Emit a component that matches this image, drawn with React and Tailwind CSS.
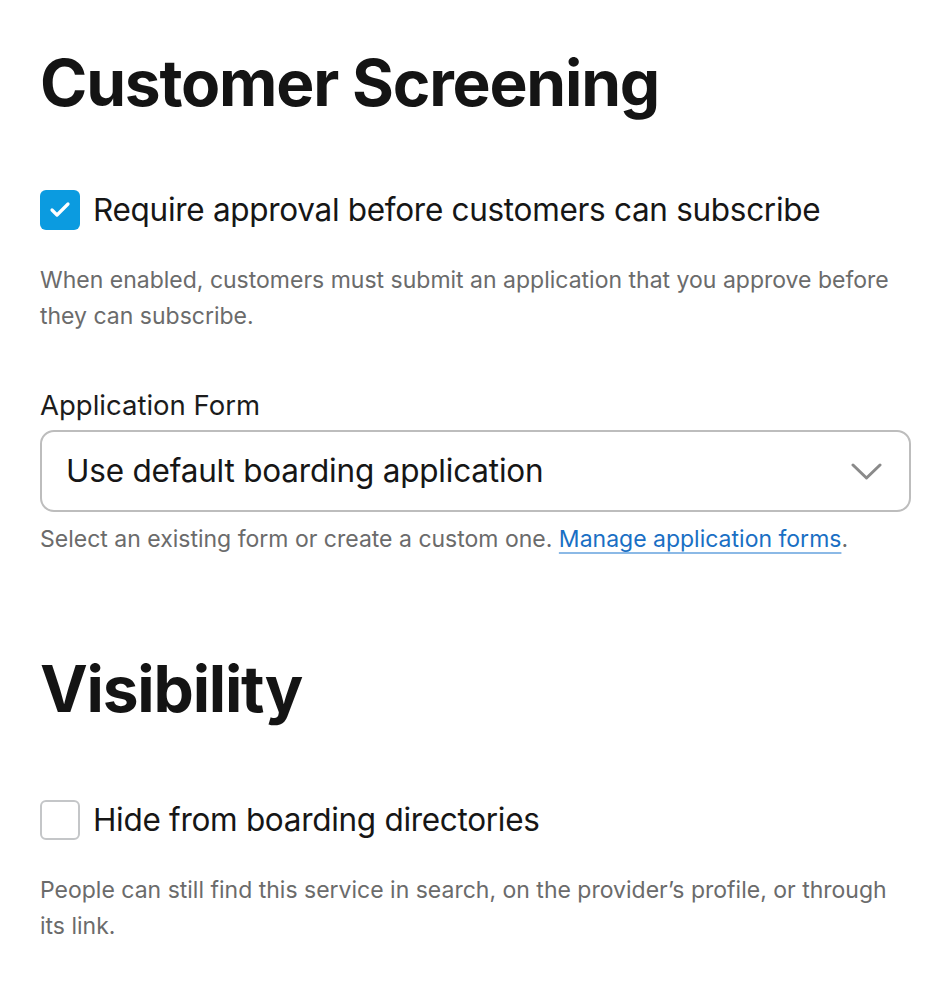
import { Check } from 'lucide-react';

function CheckRow({ checked, label }) {
  return (
    <label className="flex items-center gap-[13px]">
      {checked ? (
        <span className="flex h-10 w-10 items-center justify-center rounded-[6px] bg-[#0b9be0]">
          <Check className="h-6 w-6 text-white" strokeWidth={3.2} />
        </span>
      ) : (
        <span className="h-10 w-10 rounded-[6px] border-2 border-[#c4c6c8] bg-white" />
      )}
      <span className="text-[31.5px] leading-10 tracking-[-0.3px] text-[#161616]">{label}</span>
    </label>
  );
}

export default function App() {
  return (
    <div className="min-h-screen bg-white px-10 pt-[45px]" style={{ fontFamily: 'Inter, "Noto Sans", sans-serif' }}>
      {/* Customer Screening */}
      <h1 className="text-[64px] font-bold leading-[76px] tracking-[-1.2px] text-[#141414]">Customer Screening</h1>

      <div className="mt-[69px]">
        <CheckRow checked label="Require approval before customers can subscribe" />
      </div>
      <p className="mt-[32px] text-[23px] leading-[36px] text-[#6b6b6b]">
        When enabled, customers must submit an application that you approve before they can subscribe.
      </p>

      <div className="mt-[54px] text-[27.5px] leading-[34px] text-[#1c1c1c]">Application Form</div>
      <div className="mt-[8px] flex h-[82px] w-[871px] items-center justify-between rounded-[14px] border-2 border-[#bdbdbd] pl-[24px] pr-[27px]">
        <span className="text-[31.5px] tracking-[-0.2px] text-[#161616]">Use default boarding application</span>
        <svg width="31" height="17" viewBox="0 0 31 17" fill="none" className="text-[#8a8a8a]">
          <path d="M2 2 L15.5 15 L29 2" stroke="currentColor" strokeWidth="3" strokeLinecap="round" strokeLinejoin="round" />
        </svg>
      </div>
      <p className="mt-[9px] text-[23px] leading-[36px] text-[#6b6b6b]">
        Select an existing form or create a custom one.{' '}
        <a className="text-[#1a6fc4] underline decoration-[#8bb9e6] underline-offset-[5px]">Manage application forms</a>.
      </p>

      {/* Visibility */}
      <h2 className="mt-[94px] text-[64px] font-bold leading-[76px] tracking-[-1.2px] text-[#141414]">Visibility</h2>

      <div className="mt-[73px]">
        <CheckRow label="Hide from boarding directories" />
      </div>
      <p className="mt-[32px] text-[23px] leading-[36px] text-[#6b6b6b]">
        People can still find this service in search, on the provider’s profile, or through its link.
      </p>
    </div>
  );
}
